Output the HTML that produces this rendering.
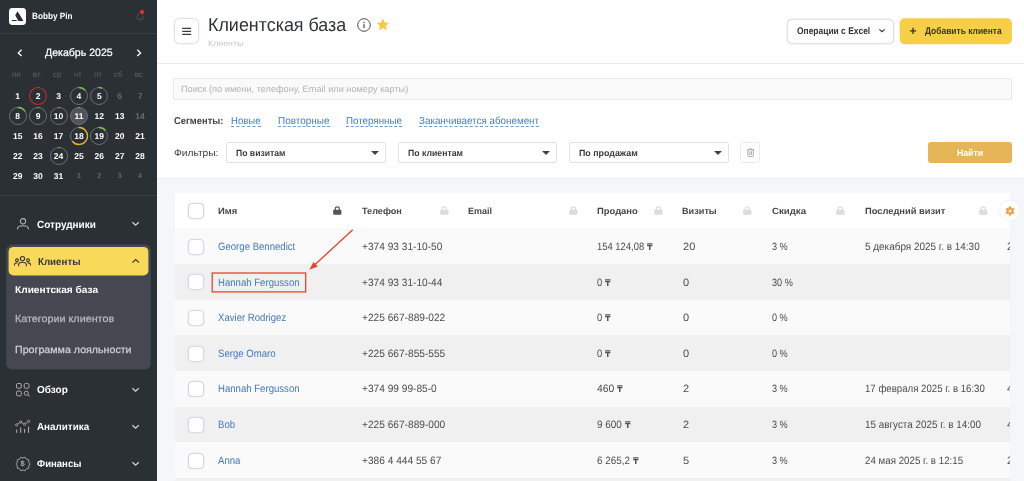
<!DOCTYPE html>
<html lang="ru">
<head>
<meta charset="utf-8">
<title>Клиентская база</title>
<style>
*{box-sizing:border-box;margin:0;padding:0}
html,body{width:1024px;height:481px;overflow:hidden;background:#f5f6fa;font-family:"Liberation Sans",sans-serif;color:#333;text-rendering:geometricPrecision}
#app{position:relative;width:1024px;height:481px;overflow:hidden;will-change:transform}
#side{position:absolute;left:0;top:0;width:157px;height:481px;background:#2b3034;color:#fff}
#side .hl{position:absolute;left:0;width:157px;height:1px;background:#3b3e44}
.t{position:absolute;white-space:nowrap;line-height:1;transform-origin:0 0}
.cd{position:absolute;width:24px;text-align:center;font-size:8.5px;font-weight:700;color:#fff;line-height:10px}
.cd.m{color:#696c75;font-weight:700}
.cd.s{color:#62656d;font-weight:700;font-size:7.2px}
.ch{position:absolute;width:24px;text-align:center;font-size:8px;color:#5f626a;line-height:10px}
svg{position:absolute;overflow:visible}
#head{position:absolute;left:157px;top:0;width:867px;height:64px;background:#fff;border-bottom:1px solid #e9eaee}
#filt{position:absolute;left:157px;top:64px;width:867px;height:115px;background:#fff;border-bottom:1px solid #ecedf1}
.sel{position:absolute;top:142.2px;height:20.8px;background:#fff;border:1px solid #e2e2e2;border-radius:2px}
.sel:after{content:"";position:absolute;right:6px;top:8.2px;border-left:4px solid transparent;border-right:4px solid transparent;border-top:4px solid #444}
.ul{position:absolute;height:0;border-bottom:1px dashed #6a9fdc}
#tbl{position:absolute;left:175px;top:193px;width:835px;height:288px;overflow:hidden;background:#fafafa}
.row{position:absolute;left:0.4px;width:835px}
.cb{position:absolute;width:16px;height:16px;border:1px solid #d8dae8;border-radius:4px;background:#fff;box-shadow:0 0 0 0.35px #d8dae8}
</style>
</head>
<body>
<div id="app">
<div id="side">
<div style="position:absolute;left:8.6px;top:7.5px;width:17.3px;height:17.4px;border-radius:3.4px;background:#fff"></div><svg style="left:8.6px;top:7.5px" width="17.3" height="17.4" viewBox="0 0 17.3 17.4"><path d="M8.600 3.300 L14.400 13 L9.400 13 L6.200 7.200 Z M3.200 12 L8 12 L7.500 13 L2.600 13 Z" fill="#2a2c31"/></svg><div class="t" style="left:31.7px;top:12px;font-size:9px;color:#fff;transform:scaleX(0.912);font-weight:700;">Bobby Pin</div><svg style="left:135.8px;top:11.6px" width="8.400" height="9.600" viewBox="0 0 8.400 9.600"><path d="M4.200 0.500 C2.400 0.500 1.800 2 1.800 3.500 C1.800 5.600 0.600 6.400 0.600 7.100 L7.800 7.100 C7.800 6.400 6.600 5.600 6.600 3.500 C6.600 2 6 0.500 4.200 0.500 Z M3.200 8.200 C3.400 9.100 5 9.100 5.200 8.200" fill="none" stroke="#555860" stroke-width="0.8"/></svg><div style="position:absolute;left:139.200px;top:9.100px;width:5.800px;height:5.800px;border-radius:50%;background:#ef2f3a;border:0.6px solid #2b3034"></div><div class="hl" style="top:32.7px"></div><div class="t" style="left:45px;top:48px;font-size:10.7px;color:#fff;transform:scaleX(0.990);-webkit-text-stroke:0.22px #fff;">Декабрь 2025</div><svg style="left:17px;top:48.5px" width="6" height="8" viewBox="0 0 6 8"><path d="M4.6 0.8 L1.3 3.9 L4.6 7" fill="none" stroke="#fff" stroke-width="1.3"/></svg><svg style="left:135.5px;top:48.5px" width="6" height="8" viewBox="0 0 6 8"><path d="M1.3 0.8 L4.6 3.9 L1.3 7" fill="none" stroke="#fff" stroke-width="1.3"/></svg><div class="ch" style="left:4.4px;top:70px">пн</div><div class="ch" style="left:24.7px;top:70px">вт</div><div class="ch" style="left:45.3px;top:70px">ср</div><div class="ch" style="left:65.7px;top:70px">чт</div><div class="ch" style="left:86px;top:70px">пт</div><div class="ch" style="left:106.3px;top:70px">сб</div><div class="ch" style="left:126.75px;top:70px">вс</div>
<div class="cd" style="left:5.7px;top:91.2px">1</div><svg style="left:28.1px;top:86.3px" width="20" height="20" viewBox="-10 -10 20 20"><circle r="8.5" fill="none" stroke="#bd2a30" stroke-width="1.2"/><path d="M-0.59 -8.48 A8.5 8.5 0 0 1 0.44 -8.49" fill="none" stroke="#6b6e77" stroke-width="1.2"/></svg><div class="cd" style="left:26.1px;top:91.2px">2</div><div class="cd" style="left:46.5px;top:91.2px">3</div><svg style="left:68.9px;top:86.3px" width="20" height="20" viewBox="-10 -10 20 20"><circle r="8.5" fill="none" stroke="#6b6e77" stroke-width="1"/><path d="M-0.3 -8.49 A8.5 8.5 0 0 1 6.32 -5.69" fill="none" stroke="#7cc242" stroke-width="1.3"/></svg><div class="cd" style="left:66.9px;top:91.2px">4</div><svg style="left:89.3px;top:86.3px" width="20" height="20" viewBox="-10 -10 20 20"><circle r="8.5" fill="none" stroke="#6b6e77" stroke-width="1"/><path d="M-0.3 -8.49 A8.5 8.5 0 0 1 3.18 -7.88" fill="none" stroke="#7cc242" stroke-width="1.3"/></svg><div class="cd" style="left:87.3px;top:91.2px">5</div><div class="cd m" style="left:107.7px;top:91.2px">6</div><div class="cd m" style="left:128px;top:91.2px">7</div>
<svg style="left:7.7px;top:106.25px" width="20" height="20" viewBox="-10 -10 20 20"><circle r="8.5" fill="none" stroke="#6b6e77" stroke-width="1"/><path d="M-0.3 -8.49 A8.5 8.5 0 0 1 7.21 -4.5" fill="none" stroke="#7cc242" stroke-width="1.3"/></svg><div class="cd" style="left:5.7px;top:111.15px">8</div><svg style="left:28.1px;top:106.25px" width="20" height="20" viewBox="-10 -10 20 20"><circle r="8.5" fill="none" stroke="#6b6e77" stroke-width="1"/><path d="M-0.59 -8.48 A8.5 8.5 0 0 1 0.89 -8.45" fill="none" stroke="#7cc242" stroke-width="1.2"/></svg><div class="cd" style="left:26.1px;top:111.15px">9</div><svg style="left:48.5px;top:106.25px" width="20" height="20" viewBox="-10 -10 20 20"><circle r="8.5" fill="none" stroke="#6b6e77" stroke-width="1"/><path d="M-0.59 -8.48 A8.5 8.5 0 0 1 0.89 -8.45" fill="none" stroke="#7cc242" stroke-width="1.2"/></svg><div class="cd" style="left:46.5px;top:111.15px">10</div><svg style="left:68.9px;top:106.25px" width="20" height="20" viewBox="-10 -10 20 20"><circle r="8.5" fill="#50535c" stroke="#6b6e77" stroke-width="1"/><path d="M-0.59 -8.48 A8.5 8.5 0 0 1 0.89 -8.45" fill="none" stroke="#7cc242" stroke-width="1.2"/></svg><div class="cd" style="left:66.9px;top:111.15px">11</div><div class="cd" style="left:87.3px;top:111.15px">12</div><div class="cd" style="left:107.7px;top:111.15px">13</div><div class="cd m" style="left:128px;top:111.15px">14</div>
<div class="cd" style="left:5.7px;top:131.2px">15</div><div class="cd" style="left:26.1px;top:131.2px">16</div><div class="cd" style="left:46.5px;top:131.2px">17</div><svg style="left:68.9px;top:126.3px" width="20" height="20" viewBox="-10 -10 20 20"><circle r="8.5" fill="none" stroke="#6b6e77" stroke-width="1"/><path d="M-0.3 -8.49 A8.5 8.5 0 1 1 -6.7 5.23" fill="none" stroke="#e8b530" stroke-width="1.3"/></svg><div class="cd" style="left:66.9px;top:131.2px">18</div><svg style="left:89.3px;top:126.3px" width="20" height="20" viewBox="-10 -10 20 20"><circle r="8.5" fill="none" stroke="#6b6e77" stroke-width="1"/><path d="M-0.3 -8.49 A8.5 8.5 0 0 1 6.51 -5.46" fill="none" stroke="#7cc242" stroke-width="1.3"/></svg><div class="cd" style="left:87.3px;top:131.2px">19</div><div class="cd" style="left:107.7px;top:131.2px">20</div><div class="cd" style="left:128px;top:131.2px">21</div>
<div class="cd" style="left:5.7px;top:151.1px">22</div><div class="cd" style="left:26.1px;top:151.1px">23</div><svg style="left:48.5px;top:146.2px" width="20" height="20" viewBox="-10 -10 20 20"><circle r="8.5" fill="none" stroke="#6b6e77" stroke-width="1"/><path d="M-0.59 -8.48 A8.5 8.5 0 0 1 0.89 -8.45" fill="none" stroke="#7cc242" stroke-width="1.2"/></svg><div class="cd" style="left:46.5px;top:151.1px">24</div><div class="cd" style="left:66.9px;top:151.1px">25</div><div class="cd" style="left:87.3px;top:151.1px">26</div><div class="cd" style="left:107.7px;top:151.1px">27</div><div class="cd" style="left:128px;top:151.1px">28</div>
<div class="cd" style="left:5.7px;top:171.1px">29</div><div class="cd" style="left:26.1px;top:171.1px">30</div><div class="cd" style="left:46.5px;top:171.1px">31</div><div class="cd s" style="left:66.9px;top:171.1px">1</div><div class="cd s" style="left:87.3px;top:171.1px">2</div><div class="cd s" style="left:107.7px;top:171.1px">3</div><div class="cd s" style="left:128px;top:171.1px">4</div>
<div class="hl" style="top:194.7px"></div><svg style="left:16.8px;top:218.2px" width="12" height="12" viewBox="0 0 12 12"><circle cx="6" cy="3.300" r="2.700" fill="none" stroke="#b2b4ba" stroke-width="1.05"/><path d="M0.500 11.600 L0.500 10.7 C0.500 8.700 2.300 7.700 6 7.700 C9.700 7.700 11.500 8.700 11.500 10.7 L11.500 11.600" fill="none" stroke="#b2b4ba" stroke-width="1.05"/></svg><div class="t" style="left:37.2px;top:221px;font-size:10.3px;color:#fff;transform:scaleX(0.970);font-weight:700;">Сотрудники</div><svg style="left:132px;top:222.3px" width="7.2" height="3.8" viewBox="0 0 7.2 3.8"><path d="M0.400 0.3 L3.6 3.2 L6.8 0.3" fill="none" stroke="#d4d6da" stroke-width="1.2"/></svg><svg style="left:0;top:240px" width="157" height="135" viewBox="0 240 157 135"><rect x="6.200" y="244.500" width="144.600" height="124.900" rx="6" fill="#454850"/><rect x="8.600" y="246.900" width="139.800" height="28.600" rx="5" fill="#f8d95a"/></svg><svg style="left:14.4px;top:256px" width="17" height="10.5" viewBox="0 0 17 10.5"><g fill="none" stroke="#33363b" stroke-width="1.1"><circle cx="8.5" cy="2.600" r="2.100"/><path d="M4.6 10.3 L4.6 8.9 C4.6 7 6.100 6.2 8.5 6.2 C10.9 6.2 12.400 7 12.400 8.9 L12.400 10.3"/><circle cx="3" cy="4.300" r="1.400"/><path d="M0.500 9.400 L0.500 8.600 C0.500 7.400 1.500 6.800 3.400 6.900"/><circle cx="14" cy="4.300" r="1.400"/><path d="M16.5 9.400 L16.5 8.600 C16.5 7.400 15.5 6.800 13.600 6.900"/></g></svg><div class="t" style="left:37.5px;top:258px;font-size:10.2px;color:#33363b;transform:scaleX(0.955);font-weight:700;">Клиенты</div><svg style="left:132px;top:258.6px" width="7.4" height="4" viewBox="0 0 7.4 4"><path d="M0.400 3.700 L3.700 0.600 L7 3.700" fill="none" stroke="#2f3237" stroke-width="1.15"/></svg><div class="t" style="left:14.5px;top:286px;font-size:10px;color:#fff;transform:scaleX(1.014);font-weight:700;">Клиентская база</div><div class="t" style="left:14.5px;top:315px;font-size:10.2px;color:#b7b9bf;transform:scaleX(1.057);-webkit-text-stroke:0.25px #b7b9bf;">Категории клиентов</div><div class="t" style="left:14.5px;top:346px;font-size:10.2px;color:#cfd1d5;transform:scaleX(1.046);-webkit-text-stroke:0.25px #cfd1d5;">Программа лояльности</div><svg style="left:15.600px;top:383.1px" width="14.5" height="13.600" viewBox="0 0 14.5 13.600"><g fill="none" stroke="#b2b4ba" stroke-width="0.9"><rect x="0.500" y="0.500" width="4.800" height="4.800" rx="1.300"/><rect x="8.200" y="0.500" width="4.800" height="4.800" rx="1.300"/><rect x="0.500" y="8.100" width="4.800" height="4.800" rx="1.300"/><circle cx="10.300" cy="10.200" r="2.100"/><path d="M11.900 11.800 L13.700 13.400"/></g></svg><div class="t" style="left:37.2px;top:386px;font-size:10.2px;color:#fff;transform:scaleX(0.982);font-weight:700;">Обзор</div><svg style="left:132px;top:388.1px" width="7.2" height="3.8" viewBox="0 0 7.2 3.8"><path d="M0.400 0.3 L3.6 3.2 L6.8 0.3" fill="none" stroke="#d4d6da" stroke-width="1.2"/></svg><svg style="left:15.2px;top:420px" width="15.300" height="13" viewBox="0 0 15.300 13"><g fill="none" stroke="#b2b4ba" stroke-width="0.8"><circle cx="1.700" cy="4.800" r="1.100"/><circle cx="5.700" cy="2" r="1.100"/><circle cx="9.600" cy="4.300" r="1.100"/><circle cx="13.600" cy="1.400" r="1.100"/><path d="M2.600 4.100 L4.800 2.700 M6.700 2.600 L8.600 3.700 M10.5 3.600 L12.700 2.100"/><path d="M1.700 9.5 L1.700 12.800 M5.700 7.5 L5.700 12.800 M9.600 9 L9.600 12.800 M13.600 6.5 L13.600 12.800" stroke-width="1"/></g></svg><div class="t" style="left:37.2px;top:423px;font-size:10.2px;color:#fff;transform:scaleX(0.967);font-weight:700;">Аналитика</div><svg style="left:132px;top:425px" width="7.2" height="3.8" viewBox="0 0 7.2 3.8"><path d="M0.400 0.3 L3.6 3.2 L6.8 0.3" fill="none" stroke="#d4d6da" stroke-width="1.2"/></svg><svg style="left:15.700px;top:456.8px" width="14" height="14" viewBox="0 0 14 14"><path d="M14.1 7 L12.71 8.85 L12.74 11.17 L10.53 11.85 L9.19 13.75 L7 13 L4.81 13.75 L3.47 11.85 L1.26 11.17 L1.29 8.85 L-0.1 7 L1.29 5.15 L1.26 2.83 L3.47 2.15 L4.81 0.25 L7 1 L9.19 0.25 L10.53 2.15 L12.74 2.83 L12.71 5.15 Z" fill="none" stroke="#b2b4ba" stroke-width="0.85" stroke-linejoin="round"/></svg><div class="t" style="left:15.700px;top:460px;width:14px;text-align:center;font-size:7.5px;font-weight:700;color:#b2b4ba">$</div><div class="t" style="left:37.2px;top:460px;font-size:10.1px;color:#fff;transform:scaleX(0.947);font-weight:700;">Финансы</div><svg style="left:132px;top:462.25px" width="7.2" height="3.8" viewBox="0 0 7.2 3.8"><path d="M0.400 0.3 L3.6 3.2 L6.8 0.3" fill="none" stroke="#d4d6da" stroke-width="1.2"/></svg></div>
<div id="head"></div>
<div style="position:absolute;left:173.8px;top:18.4px;width:25px;height:25.3px;border:1px solid #dfe1ef;border-radius:5.5px;background:#fff;box-shadow:0 0 0 0.5px #eeeff8"></div><svg style="left:180px;top:25px" width="14" height="12" viewBox="180 25 14 12"><path d="M182.200 28.300 L191.100 28.300 M182.200 31.300 L191.100 31.300 M182.200 34.300 L191.100 34.300" fill="none" stroke="#3c3c3c" stroke-width="1.350"/></svg><div class="t" style="left:208.2px;top:16px;font-size:18.7px;color:#2f3338;transform:scaleX(0.958);">Клиентская база</div><div class="t" style="left:208.2px;top:40px;font-size:8.1px;color:#c4c7d1;transform:scaleX(1.090);">Клиенты</div><svg style="left:357.4px;top:17.5px" width="14" height="14" viewBox="0 0 14 14"><circle cx="7" cy="7" r="6.300" fill="none" stroke="#4a4a4f" stroke-width="1"/><rect x="6.4" y="6.100" width="1.200" height="3.900" fill="#4a4a4f"/><rect x="6.4" y="3.900" width="1.200" height="1.300" fill="#4a4a4f"/></svg><svg style="left:377.2px;top:19.200px" width="11.700" height="11.200" viewBox="0 0 24 23"><path d="M12 0.500 L15.300 7.900 L23.300 8.700 L17.300 14.100 L19 22 L12 18 L5 22 L6.700 14.100 L0.700 8.700 L8.700 7.900 Z" fill="#f6c944" stroke="#f6c944" stroke-width="1.500" stroke-linejoin="round"/></svg><div style="position:absolute;left:786.7px;top:18.800px;width:107px;height:25px;border:1px solid #dddfed;border-radius:5px;background:#fff;box-shadow:0 0 0 0.6px #e9ebf5"></div><div class="t" style="left:796.7px;top:27px;font-size:9.7px;color:#363636;transform:scaleX(0.871);font-weight:700;">Операции с Excel</div><svg style="left:878.5px;top:29.400px" width="6" height="3.4" viewBox="0 0 6 3.4"><path d="M0.400 0.400 L3 2.800 L5.600 0.400" fill="none" stroke="#333" stroke-width="1.2"/></svg><svg style="left:895px;top:15px" width="120" height="32" viewBox="895 15 120 32"><rect x="899.700" y="18.350" width="112.200" height="25.800" rx="5" fill="#f6cf47"/></svg><svg style="left:908px;top:26px" width="10" height="10" viewBox="908 26 10 10"><path d="M909.900 30.800 L916.100 30.800 M913 27.700 L913 33.900" fill="none" stroke="#333" stroke-width="1.300"/></svg><div class="t" style="left:924.9px;top:27px;font-size:9.7px;color:#363633;transform:scaleX(0.871);font-weight:700;">Добавить клиента</div><div id="filt"></div>
<div style="position:absolute;left:173px;top:78px;width:839px;height:21.5px;background:#fafafa;border:1px solid #e9e9e9;border-radius:1px"></div><div class="t" style="left:181.4px;top:85px;font-size:9.2px;color:#b2b2b2;transform:scaleX(1.001);">Поиск (по имени, телефону, Email или номеру карты)</div><div class="t" style="left:173.5px;top:117px;font-size:9.9px;color:#444;transform:scaleX(0.948);font-weight:700;">Сегменты:</div><div class="t" style="left:231px;top:117px;font-size:10.2px;color:#3d7fc9;transform:scaleX(0.938);">Новые</div><div class="ul" style="left:231px;top:126px;width:29.5px"></div><div class="t" style="left:278px;top:117px;font-size:10.2px;color:#3d7fc9;transform:scaleX(0.977);">Повторные</div><div class="ul" style="left:278px;top:126px;width:51.5px"></div><div class="t" style="left:346px;top:117px;font-size:10.2px;color:#3d7fc9;transform:scaleX(0.959);">Потерянные</div><div class="ul" style="left:346px;top:126px;width:56px"></div><div class="t" style="left:419.3px;top:117px;font-size:10.2px;color:#3d7fc9;transform:scaleX(0.964);">Заканчивается абонемент</div><div class="ul" style="left:419.3px;top:126px;width:120.1px"></div><div class="t" style="left:173.5px;top:149px;font-size:9.7px;color:#3a3a3a;transform:scaleX(1.053);">Фильтры:</div><div class="sel" style="left:225.8px;width:160.6px"></div><div class="t" style="left:236px;top:149px;font-size:9px;color:#3a3a3a;transform:scaleX(0.957);font-weight:700;">По визитам</div><div class="sel" style="left:397.8px;width:159.5px"></div><div class="t" style="left:407.6px;top:149px;font-size:9px;color:#3a3a3a;transform:scaleX(0.966);font-weight:700;">По клиентам</div><div class="sel" style="left:569.2px;width:160px"></div><div class="t" style="left:579px;top:149px;font-size:9px;color:#3a3a3a;transform:scaleX(0.984);font-weight:700;">По продажам</div><div style="position:absolute;left:740.3px;top:142.1px;width:20px;height:20.9px;border:1px solid #ebebeb;border-radius:2.5px;background:#fff"></div><svg style="left:746.900px;top:148px" width="7.200" height="8.800" viewBox="0 0 7.200 8.800"><g fill="none" stroke="#999" stroke-width="0.85"><path d="M0.300 1.700 L6.900 1.700 M2.300 1.600 C2.300 0.200 4.900 0.200 4.900 1.600 M0.900 1.700 L0.900 7.700 C0.900 8.100 1.200 8.400 1.600 8.400 L5.600 8.400 C6 8.400 6.300 8.100 6.300 7.700 L6.300 1.700 M2.800 3.200 L2.800 7 M4.400 3.200 L4.400 7"/></g></svg><div style="position:absolute;left:928.2px;top:142.2px;width:83.7px;height:20.8px;border-radius:3px;background:#e6b656"></div><div class="t" style="left:957.3px;top:149px;font-size:9.6px;color:#fff;transform:scaleX(0.903);font-weight:700;">Найти</div><div id="tbl">
<div class="row" style="top:0;height:35.4px;background:#fff"></div><div class="cb" style="left:13.3px;top:9.8px"></div><div class="t" style="left:43.3px;top:14px;font-size:9px;color:#464646;transform:scaleX(1.050);font-weight:700;">Имя</div><div class="t" style="left:186.6px;top:14px;font-size:9px;color:#464646;transform:scaleX(1.011);font-weight:700;">Телефон</div><div class="t" style="left:293.4px;top:14px;font-size:9px;color:#464646;transform:scaleX(0.995);font-weight:700;">Email</div><div class="t" style="left:421.8px;top:14px;font-size:9px;color:#464646;transform:scaleX(1.046);font-weight:700;">Продано</div><div class="t" style="left:507.3px;top:14px;font-size:9px;color:#464646;transform:scaleX(1.016);font-weight:700;">Визиты</div><div class="t" style="left:596.9px;top:14px;font-size:9px;color:#464646;transform:scaleX(1.072);font-weight:700;">Скидка</div><div class="t" style="left:689.5px;top:14px;font-size:9px;color:#464646;transform:scaleX(1.034);font-weight:700;">Последний визит</div><svg style="left:157.8px;top:13.2px" width="8.600" height="8.800" viewBox="0 0 8.600 8.800"><path d="M2.300 4 L2.300 2.700 C2.300 0.200 6.300 0.200 6.300 2.700 L6.300 4" fill="none" stroke="#555" stroke-width="1.200"/><rect x="0.200" y="3.700" width="8.200" height="5" rx="0.800" fill="#555"/></svg><svg style="left:264.8px;top:13.2px" width="8.600" height="8.800" viewBox="0 0 8.600 8.800"><path d="M2.300 4 L2.300 2.700 C2.300 0.200 6.300 0.200 6.300 2.700 L6.300 4" fill="none" stroke="#dcdcdc" stroke-width="1.200"/><rect x="0.200" y="3.700" width="8.200" height="5" rx="0.800" fill="#dcdcdc"/></svg><svg style="left:393.5px;top:13.2px" width="8.600" height="8.800" viewBox="0 0 8.600 8.800"><path d="M2.300 4 L2.300 2.700 C2.300 0.200 6.300 0.200 6.300 2.700 L6.300 4" fill="none" stroke="#dcdcdc" stroke-width="1.200"/><rect x="0.200" y="3.700" width="8.200" height="5" rx="0.800" fill="#dcdcdc"/></svg><svg style="left:479px;top:13.2px" width="8.600" height="8.800" viewBox="0 0 8.600 8.800"><path d="M2.300 4 L2.300 2.700 C2.300 0.200 6.300 0.200 6.300 2.700 L6.300 4" fill="none" stroke="#dcdcdc" stroke-width="1.200"/><rect x="0.200" y="3.700" width="8.200" height="5" rx="0.800" fill="#dcdcdc"/></svg><svg style="left:568px;top:13.2px" width="8.600" height="8.800" viewBox="0 0 8.600 8.800"><path d="M2.300 4 L2.300 2.700 C2.300 0.200 6.300 0.200 6.300 2.700 L6.300 4" fill="none" stroke="#dcdcdc" stroke-width="1.200"/><rect x="0.200" y="3.700" width="8.200" height="5" rx="0.800" fill="#dcdcdc"/></svg><svg style="left:661.1px;top:13.2px" width="8.600" height="8.800" viewBox="0 0 8.600 8.800"><path d="M2.300 4 L2.300 2.700 C2.300 0.200 6.300 0.200 6.300 2.700 L6.300 4" fill="none" stroke="#dcdcdc" stroke-width="1.200"/><rect x="0.200" y="3.700" width="8.200" height="5" rx="0.800" fill="#dcdcdc"/></svg><svg style="left:804px;top:13.2px" width="8.600" height="8.800" viewBox="0 0 8.600 8.800"><path d="M2.300 4 L2.300 2.700 C2.300 0.200 6.300 0.200 6.300 2.700 L6.300 4" fill="none" stroke="#dcdcdc" stroke-width="1.200"/><rect x="0.200" y="3.700" width="8.200" height="5" rx="0.800" fill="#dcdcdc"/></svg>
<div class="row" style="top:35.4px;height:35.73px;background:#fafafa"></div><div class="cb" style="left:13.3px;top:45.8px"></div><div class="t" style="left:43.4px;top:49px;font-size:10.6px;color:#4479b8;transform:scaleX(0.905);">George Bennedict</div><div class="t" style="left:186.5px;top:49px;font-size:10.6px;color:#4d4d4d;transform:scaleX(0.958);">+374 93 31-10-50</div><div class="t" style="left:421.7px;top:49px;font-size:10.6px;color:#4d4d4d;transform:scaleX(0.890);">154 124,08</div><div class="t" style="left:472.1px;top:50px;font-size:9.4px;color:#555;font-family:'DejaVu Sans',sans-serif;font-weight:700;transform:scaleX(0.84)">₸</div><div class="t" style="left:507.5px;top:49px;font-size:10.6px;color:#4d4d4d;transform:scaleX(1.040);">20</div><div class="t" style="left:597px;top:49px;font-size:10.6px;color:#4d4d4d;transform:scaleX(0.861);">3 %</div><div class="t" style="left:689.7px;top:49px;font-size:10.6px;color:#4d4d4d;transform:scaleX(0.938);">5 декабря 2025 г. в 14:30</div><div class="t" style="left:831.8px;top:49px;font-size:10.6px;color:#4d4d4d;transform:scaleX(0.958);">2</div>
<div class="row" style="top:71.03px;height:35.73px;background:#f0f0f0"></div><div class="cb" style="left:13.3px;top:81.43px"></div><div class="t" style="left:43.4px;top:85px;font-size:10.6px;color:#4479b8;transform:scaleX(0.905);">Hannah Fergusson</div><div class="t" style="left:186.5px;top:85px;font-size:10.6px;color:#4d4d4d;transform:scaleX(0.958);">+374 93 31-10-44</div><div class="t" style="left:421.7px;top:85px;font-size:10.6px;color:#4d4d4d;transform:scaleX(0.882);">0</div><div class="t" style="left:430.1px;top:86px;font-size:9.4px;color:#555;font-family:'DejaVu Sans',sans-serif;font-weight:700;transform:scaleX(0.84)">₸</div><div class="t" style="left:507.5px;top:85px;font-size:10.6px;color:#4d4d4d;transform:scaleX(1.040);">0</div><div class="t" style="left:597px;top:85px;font-size:10.6px;color:#4d4d4d;transform:scaleX(0.861);">30 %</div>
<div class="row" style="top:106.66px;height:35.73px;background:#fafafa"></div><div class="cb" style="left:13.3px;top:117.06px"></div><div class="t" style="left:43.4px;top:120px;font-size:10.6px;color:#4479b8;transform:scaleX(0.905);">Xavier Rodrigez</div><div class="t" style="left:186.5px;top:120px;font-size:10.6px;color:#4d4d4d;transform:scaleX(0.958);">+225 667-889-022</div><div class="t" style="left:421.7px;top:120px;font-size:10.6px;color:#4d4d4d;transform:scaleX(0.882);">0</div><div class="t" style="left:430.1px;top:121px;font-size:9.4px;color:#555;font-family:'DejaVu Sans',sans-serif;font-weight:700;transform:scaleX(0.84)">₸</div><div class="t" style="left:507.5px;top:120px;font-size:10.6px;color:#4d4d4d;transform:scaleX(1.040);">0</div><div class="t" style="left:597px;top:120px;font-size:10.6px;color:#4d4d4d;transform:scaleX(0.861);">0 %</div>
<div class="row" style="top:142.29px;height:35.73px;background:#f0f0f0"></div><div class="cb" style="left:13.3px;top:152.69px"></div><div class="t" style="left:43.4px;top:156px;font-size:10.6px;color:#4479b8;transform:scaleX(0.905);">Serge Omaro</div><div class="t" style="left:186.5px;top:156px;font-size:10.6px;color:#4d4d4d;transform:scaleX(0.958);">+225 667-855-555</div><div class="t" style="left:421.7px;top:156px;font-size:10.6px;color:#4d4d4d;transform:scaleX(0.882);">0</div><div class="t" style="left:430.1px;top:157px;font-size:9.4px;color:#555;font-family:'DejaVu Sans',sans-serif;font-weight:700;transform:scaleX(0.84)">₸</div><div class="t" style="left:507.5px;top:156px;font-size:10.6px;color:#4d4d4d;transform:scaleX(1.040);">0</div><div class="t" style="left:597px;top:156px;font-size:10.6px;color:#4d4d4d;transform:scaleX(0.861);">0 %</div>
<div class="row" style="top:177.92px;height:35.73px;background:#fafafa"></div><div class="cb" style="left:13.3px;top:188.32px"></div><div class="t" style="left:43.4px;top:191px;font-size:10.6px;color:#4479b8;transform:scaleX(0.905);">Hannah Fergusson</div><div class="t" style="left:186.5px;top:191px;font-size:10.6px;color:#4d4d4d;transform:scaleX(0.958);">+374 99 99-85-0</div><div class="t" style="left:421.7px;top:191px;font-size:10.6px;color:#4d4d4d;transform:scaleX(0.978);">460</div><div class="t" style="left:442.2px;top:192px;font-size:9.4px;color:#555;font-family:'DejaVu Sans',sans-serif;font-weight:700;transform:scaleX(0.84)">₸</div><div class="t" style="left:507.5px;top:191px;font-size:10.6px;color:#4d4d4d;transform:scaleX(1.040);">2</div><div class="t" style="left:597px;top:191px;font-size:10.6px;color:#4d4d4d;transform:scaleX(0.861);">3 %</div><div class="t" style="left:689.7px;top:191px;font-size:10.6px;color:#4d4d4d;transform:scaleX(0.910);">17 февраля 2025 г. в 16:30</div><div class="t" style="left:831.8px;top:191px;font-size:10.6px;color:#4d4d4d;transform:scaleX(0.958);">4</div>
<div class="row" style="top:213.55px;height:35.73px;background:#f0f0f0"></div><div class="cb" style="left:13.3px;top:223.95px"></div><div class="t" style="left:43.4px;top:227px;font-size:10.6px;color:#4479b8;transform:scaleX(0.905);">Bob</div><div class="t" style="left:186.5px;top:227px;font-size:10.6px;color:#4d4d4d;transform:scaleX(0.958);">+225 667-889-000</div><div class="t" style="left:421.7px;top:227px;font-size:10.6px;color:#4d4d4d;transform:scaleX(0.939);">9 600</div><div class="t" style="left:449.8px;top:228px;font-size:9.4px;color:#555;font-family:'DejaVu Sans',sans-serif;font-weight:700;transform:scaleX(0.84)">₸</div><div class="t" style="left:507.5px;top:227px;font-size:10.6px;color:#4d4d4d;transform:scaleX(1.040);">2</div><div class="t" style="left:597px;top:227px;font-size:10.6px;color:#4d4d4d;transform:scaleX(0.861);">3 %</div><div class="t" style="left:689.7px;top:227px;font-size:10.6px;color:#4d4d4d;transform:scaleX(0.933);">15 августа 2025 г. в 14:00</div><div class="t" style="left:831.8px;top:227px;font-size:10.6px;color:#4d4d4d;transform:scaleX(0.958);">4</div>
<div class="row" style="top:249.18px;height:35.73px;background:#fafafa"></div><div class="cb" style="left:13.3px;top:259.58px"></div><div class="t" style="left:43.4px;top:263px;font-size:10.6px;color:#4479b8;transform:scaleX(0.905);">Anna</div><div class="t" style="left:186.5px;top:263px;font-size:10.6px;color:#4d4d4d;transform:scaleX(0.958);">+386 4 444 55 67</div><div class="t" style="left:421.7px;top:263px;font-size:10.6px;color:#4d4d4d;transform:scaleX(0.930);">6 265,2</div><div class="t" style="left:457.8px;top:264px;font-size:9.4px;color:#555;font-family:'DejaVu Sans',sans-serif;font-weight:700;transform:scaleX(0.84)">₸</div><div class="t" style="left:507.5px;top:263px;font-size:10.6px;color:#4d4d4d;transform:scaleX(1.040);">5</div><div class="t" style="left:597px;top:263px;font-size:10.6px;color:#4d4d4d;transform:scaleX(0.861);">3 %</div><div class="t" style="left:689.7px;top:263px;font-size:10.6px;color:#4d4d4d;transform:scaleX(0.920);">24 мая 2025 г. в 12:15</div><div class="t" style="left:831.8px;top:263px;font-size:10.6px;color:#4d4d4d;transform:scaleX(0.958);">2</div>
<div class="row" style="top:284.81px;height:35.73px;background:#f0f0f0"></div>
</div>
<svg style="left:998px;top:199px" width="24" height="24" viewBox="0 0 24 24"><circle cx="11.600" cy="11.400" r="10.300" fill="#fff" stroke="#efeff1" stroke-width="0.8"/></svg><svg style="left:1004.800px;top:206.100px" width="10" height="10" viewBox="-5 -5 10 10"><path d="M-1.16 -2.87 L-0.99 -4.29 L0.99 -4.29 L1.16 -2.87 L1.91 -2.44 L3.22 -3 L4.21 -1.29 L3.07 -0.43 L3.07 0.43 L4.21 1.29 L3.22 3 L1.91 2.44 L1.16 2.87 L0.99 4.29 L-0.99 4.29 L-1.16 2.87 L-1.91 2.44 L-3.22 3 L-4.21 1.29 L-3.07 0.43 L-3.07 -0.43 L-4.21 -1.29 L-3.22 -3 L-1.91 -2.44 Z M0 -1.600 A1.600 1.600 0 1 0 0 1.600 A1.600 1.600 0 1 0 0 -1.600 Z" fill="#eaa04c" stroke="#eaa04c" stroke-width="0.500" stroke-linejoin="round" fill-rule="evenodd"/></svg><svg style="left:205px;top:222px" width="160" height="75" viewBox="205 222 160 75"><rect x="212.200" y="273" width="93.500" height="18.900" fill="none" stroke="#e5452f" stroke-width="1.300"/><path d="M352.700 229.800 L314 265.500" fill="none" stroke="#e5452f" stroke-width="1.350"/><path d="M309.400 269.700 L317.800 266.600 L313.400 261.900 Z" fill="#e5452f"/></svg></div>
</body>
</html>
